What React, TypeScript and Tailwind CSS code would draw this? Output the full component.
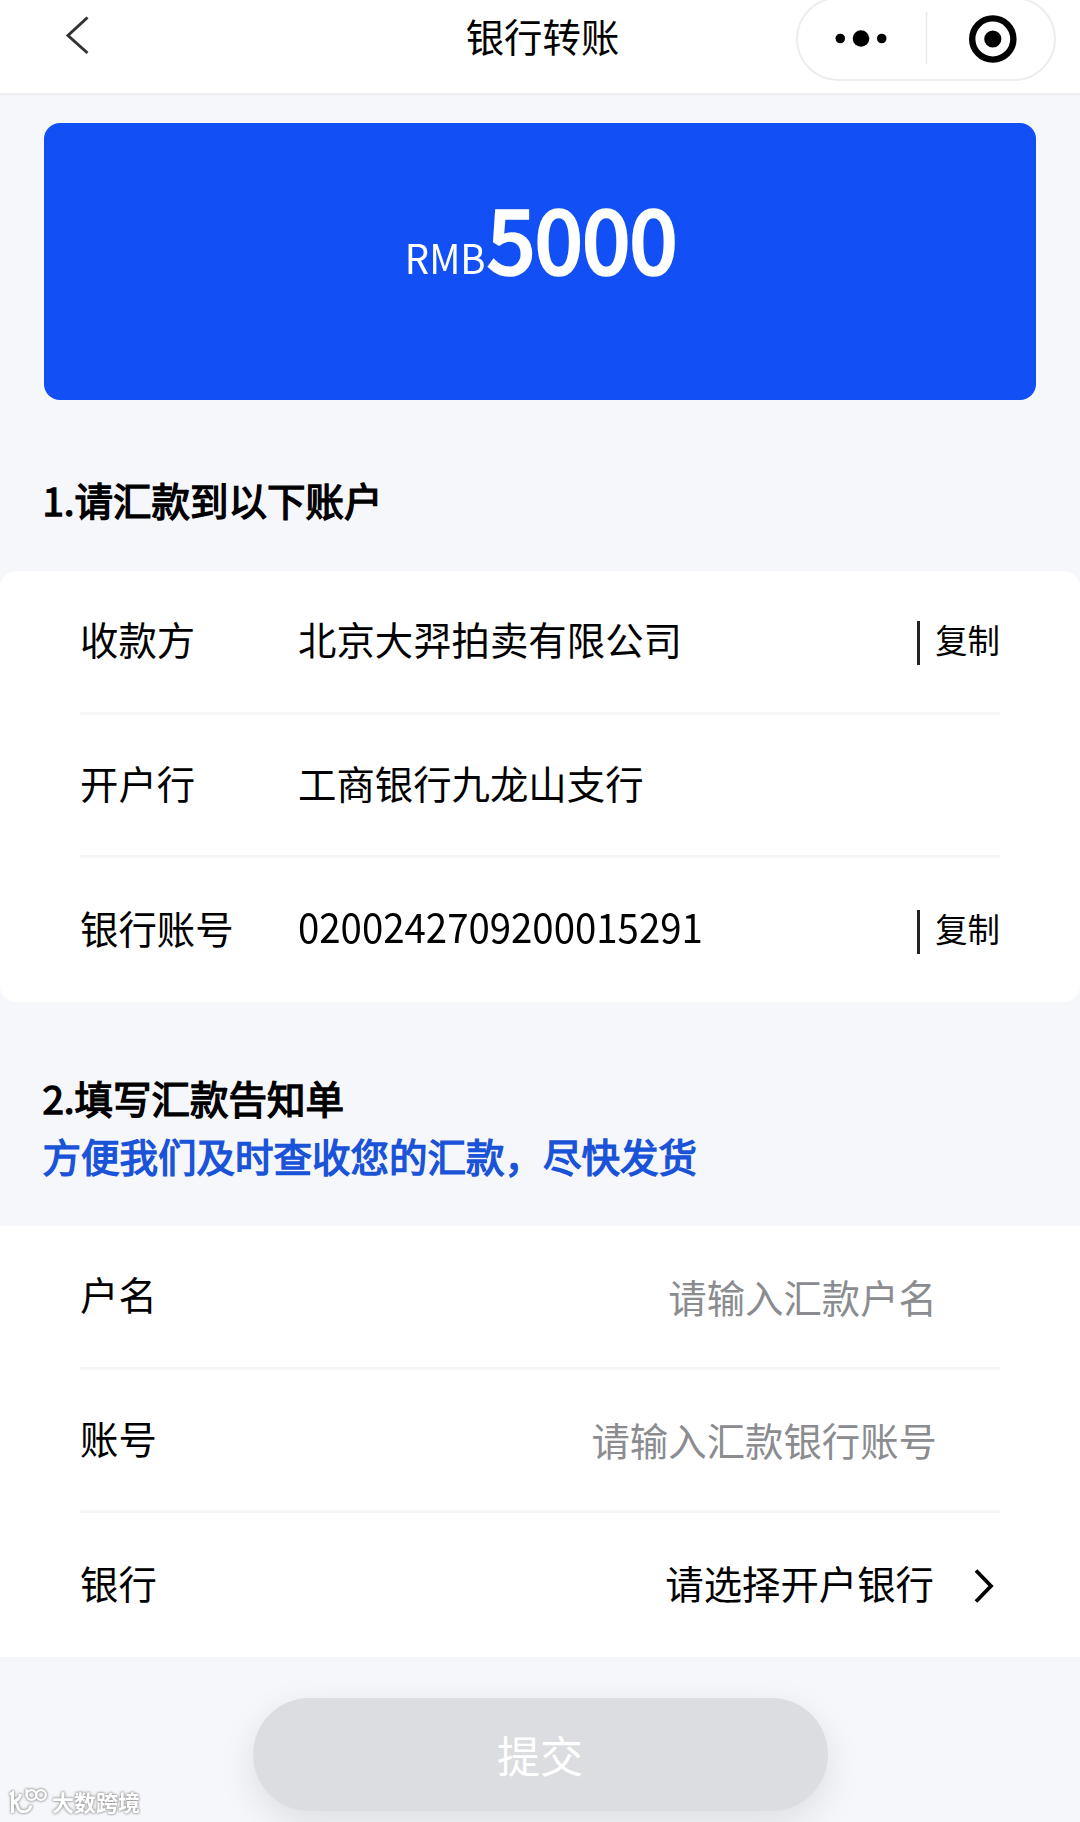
import type { ReactNode } from "react"

type AccountRow = {
  label: string
  value: string
  copyable: boolean
}

const accountRows: AccountRow[] = [
  { label: "收款方", value: "北京大羿拍卖有限公司", copyable: true },
  { label: "开户行", value: "工商银行九龙山支行", copyable: false },
  { label: "银行账号", value: "0200242709200015291", copyable: true },
]

const formRows = [
  { label: "户名", placeholder: "请输入汇款户名" },
  { label: "账号", placeholder: "请输入汇款银行账号" },
]

function Row({ children, last = false }: { children: ReactNode; last?: boolean }) {
  return (
    <div
      className={
        last
          ? "flex h-[143.5px] items-center pb-[6px]"
          : "flex h-[143.5px] items-center border-b-[3px] border-[#f6f6f7] pb-[6px]"
      }
    >
      {children}
    </div>
  )
}

function Header() {
  return (
    <header className="grid h-[95px] grid-cols-3 border-b-2 border-[#ebecee] bg-white">
      <div className="pt-[15px] pl-[63px]">
        <svg width="28" height="40" viewBox="0 0 28 40" fill="none" stroke="#333" strokeWidth="3">
          <path d="M24.5 2.5 5 20.5 24.5 38" />
        </svg>
      </div>
      <h1 className="pt-[7px] pl-[5px] text-center text-[38.4px] leading-[56px]">银行转账</h1>
      <div className="flex justify-end pr-[24px]">
        {/* Mini program capsule */}
        <div className="-mt-[3px] flex h-[84px] w-[260px] items-center rounded-full border-2 border-[#ededed]">
          <svg width="256" height="80" viewBox="0 0 256 80">
            <circle cx="42.3" cy="39.5" r="4.8" />
            <circle cx="63" cy="39.5" r="8.3" />
            <circle cx="83.7" cy="39.5" r="4.8" />
            <path d="M128.5 13v52" stroke="#e8e8e8" strokeWidth="1.5" />
            <circle cx="194.8" cy="40" r="20.6" fill="none" stroke="#000" strokeWidth="6.4" />
            <circle cx="194.8" cy="40" r="8.6" />
          </svg>
        </div>
      </div>
    </header>
  )
}

function Watermark() {
  return (
    <div className="absolute bottom-[6px] left-[8px] flex items-center text-white [filter:drop-shadow(0_0_1px_#999)_drop-shadow(0_0_1px_#aaa)]">
      <svg width="40" height="30" viewBox="0 0 40 30" fill="none" stroke="currentColor" strokeWidth="3">
        <path d="M2 8.500 4.500 7v20M12.500 8C12 12 9 14.500 5 16c3 0 4 2 4.500 4.500 1.500 7 11.500 7 13.500-1" />
        <path d="M18.500 3v7" strokeWidth="2.200" />
        <circle cx="23.500" cy="9" r="4.800" strokeWidth="2.200" />
        <circle cx="33" cy="9" r="4.800" strokeWidth="2.200" />
      </svg>
      <span className="ml-[4px] text-[22px] leading-[26px] font-bold">大数跨境</span>
    </div>
  )
}

export default function App() {
  return (
    <div className="relative h-[1822px] w-[1080px] overflow-hidden bg-[#f5f7fb] font-['Noto_Sans_CJK_SC',sans-serif] text-[38.4px] leading-[58px] text-black">
      <Header />

      {/* Amount */}
      <section className="mx-[44px] mt-[28px] flex h-[277px] items-baseline justify-center rounded-[16px] bg-[#1250f5] pt-[54px] text-white">
        <span className="origin-[50%_72%] scale-y-[1.05]">RMB</span>
        <span className="ml-[2px] -mr-[2px] origin-[50%_78%] scale-y-[1.03] text-[85.4px] leading-[120px] [-webkit-text-stroke:3.6px_white]">
          5000
        </span>
      </section>

      <h2 className="mt-[70px] pl-[42.5px] text-[38.5px] [-webkit-text-stroke:1.4px_black]">1.请汇款到以下账户</h2>

      <section className="mt-[43px] rounded-[16px] bg-white px-[80px]">
        {accountRows.map((row, index) => (
          <Row key={row.label} last={index === accountRows.length - 1}>
            <span className="w-[218px]">{row.label}</span>
            <span className={row.copyable && index > 0 ? "flex-1 origin-bottom scale-y-[1.06]" : "flex-1"}>
              {row.value}
            </span>
            {row.copyable && (
              <button className="flex items-center gap-[15px] text-[32.4px]">
                <span className="mt-[10px] h-[44px] w-[3px] bg-[#222]" />
                <span className="mt-[2px]">复制</span>
              </button>
            )}
          </Row>
        ))}
      </section>

      <div className="mt-[66.5px] pl-[42.5px] text-[38.5px]">
        <h2 className="[-webkit-text-stroke:1.4px_black]">2.填写汇款告知单</h2>
        <p className="text-[#1a53d8] [-webkit-text-stroke:1.4px_#1a53d8]">方便我们及时查收您的汇款，尽快发货</p>
      </div>

      <section className="mt-[42px] bg-white px-[80px]">
        {formRows.map((row) => (
          <Row key={row.label}>
            <span className="flex-1">{row.label}</span>
            <span className="mt-[5px] mr-[63px] text-[#8a8c90]">{row.placeholder}</span>
          </Row>
        ))}
        <Row last>
          <span className="flex-1">银行</span>
          <span className="mr-[40px]">请选择开户银行</span>
          <svg
            className="mt-[8px]"
            width="26"
            height="38"
            viewBox="0 0 26 38"
            fill="none"
            stroke="#000"
            strokeWidth="3.8"
          >
            <path d="M2 3.500 17 19 2 34.500" />
          </svg>
        </Row>
      </section>

      <button className="mx-auto mt-[41px] block h-[113px] w-[575px] rounded-full bg-[#dcdde1] text-[43px] text-white shadow-[0_12px_36px_rgba(0,0,0,0.1)]">
        提交
      </button>

      <Watermark />
    </div>
  )
}
